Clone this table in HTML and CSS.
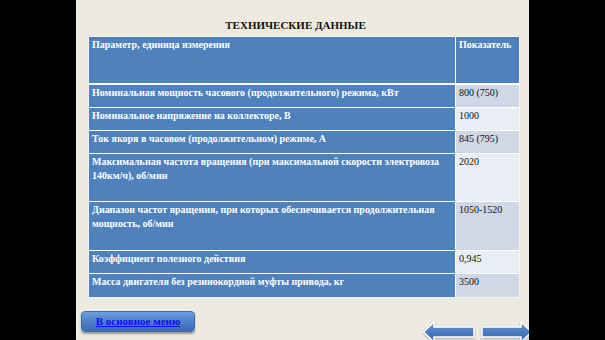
FILE: index.html
```html
<!DOCTYPE html>
<html lang="ru">
<head>
<meta charset="utf-8">
<title>Технические данные</title>
<link rel="stylesheet" href="styles.css">
</head>
<body>
<div class="slide">
  <h1 class="title">ТЕХНИЧЕСКИЕ ДАННЫЕ</h1>
  <div class="grid">
    <div class="cell head r0">Параметр, единица измерения</div>
    <div class="cell head r0">Показатель</div>

    <div class="cell name r1">Номинальная мощность часового (продолжительного) режима, кВт</div>
    <div class="cell val dark r1">800 (750)</div>

    <div class="cell name r1">Номинальное напряжение на коллекторе, В</div>
    <div class="cell val light r1">1000</div>

    <div class="cell name r1">Ток якоря в часовом (продолжительном) режиме, А</div>
    <div class="cell val dark r1">845 (795)</div>

    <div class="cell name r2">Максимальная частота вращения (при максимальной скорости электровоза<br>140км/ч), об/мин</div>
    <div class="cell val light r2">2020</div>

    <div class="cell name r3">Диапазон частот вращения, при которых обеспечивается продолжительная<br>мощность, об/мин</div>
    <div class="cell val dark r3">1050-1520</div>

    <div class="cell name r1">Коэффициент полезного действия</div>
    <div class="cell val light r1">0,945</div>

    <div class="cell name r4">Масса двигателя без резинокордной муфты привода, кг</div>
    <div class="cell val dark r4">3500</div>
  </div>
  <div class="footer">
    <a class="menu-btn" href="#">В основное меню</a>
    <div class="arrows">
      <svg class="arrow" width="54" height="22" viewBox="0 0 54 22">
        <defs>
          <linearGradient id="ag" x1="0" y1="0" x2="0" y2="1">
            <stop offset="0" stop-color="#6b9ad6"/>
            <stop offset="0.5" stop-color="#4a7cc0"/>
            <stop offset="1" stop-color="#34639f"/>
          </linearGradient>
        </defs>
        <polygon points="1.5,11 12,1 12,6 52,6 52,16 12,16 12,21" fill="url(#ag)" stroke="#ffffff" stroke-width="1.5" stroke-linejoin="miter"/>
      </svg>
      <svg class="arrow" width="54" height="22" viewBox="0 0 54 22">
        <defs>
          <linearGradient id="ag2" x1="0" y1="0" x2="0" y2="1">
            <stop offset="0" stop-color="#6b9ad6"/>
            <stop offset="0.5" stop-color="#4a7cc0"/>
            <stop offset="1" stop-color="#34639f"/>
          </linearGradient>
        </defs>
        <polygon points="1,6 40,6 40,1 50.5,11 40,21 40,16 1,16" fill="url(#ag2)" stroke="#ffffff" stroke-width="1.5" stroke-linejoin="miter"/>
      </svg>
    </div>
  </div>
</div>
</body>
</html>
```

FILE: styles.css
```css
html, body {
  margin: 0;
  padding: 0;
}
body {
  background: #000;
  width: 605px;
  height: 340px;
  overflow: hidden;
  font-family: "Liberation Serif", "Times New Roman", serif;
}
.slide {
  margin-left: 76px;
  width: 453px;
  height: 340px;
  background: #edeae0;
  box-shadow: inset 1px 0 0 #f8f6f0;
  overflow: hidden;
  display: flex;
  flex-direction: column;
}
.title {
  margin: 0;
  padding: 18px 14px 0 0;
  height: 14px;
  line-height: 14px;
  font-size: 11px;
  font-weight: bold;
  text-align: center;
  color: #111;
}
.grid {
  margin: 5px 0 0 13px;
  width: 430px;
  display: grid;
  grid-template-columns: 366px 63px;
  gap: 1px;
  background: #ffffff;
  outline: 1px solid #f4f6fa;
}
.cell {
  box-sizing: border-box;
  padding: 1px 3px 0 3px;
  font-size: 10px;
  line-height: 14px;
}
.head {
  background: #4f81bd;
  color: #fff;
  font-weight: bold;
  height: 47px;
  border-bottom: 1px solid #ffffff;
}
.name {
  background: #4f81bd;
  color: #fff;
  font-weight: bold;
}
.val {
  color: #111;
}
.dark { background: #d0d8e8; }
.light { background: #e9edf4; }
.r1 { height: 22px; }
.r2 { height: 47px; }
.r3 { height: 48px; }
.r4 { height: 23px; }
.footer {
  display: flex;
  align-items: flex-start;
  margin-top: 14px;
}
.menu-btn {
  flex-shrink: 0;
  margin-left: 5px;
  width: 114px;
  height: 21px;
  box-sizing: border-box;
  border: 1px solid #3d6cab;
  border-radius: 4px;
  background: linear-gradient(#6d9fe0, #4a7ec6 55%, #3b6db3);
  box-shadow: 0 2px 2px rgba(0, 0, 0, 0.35);
  color: #1010e6;
  font-weight: bold;
  font-size: 11px;
  line-height: 19px;
  text-align: center;
  text-decoration: underline;
}
.arrows {
  display: flex;
  gap: 5px;
  margin-left: 227px;
  margin-top: 10px;
  flex-shrink: 0;
}
.arrow {
  display: block;
  flex-shrink: 0;
  filter: drop-shadow(0 1px 1px rgba(0, 0, 0, 0.3));
}
```
